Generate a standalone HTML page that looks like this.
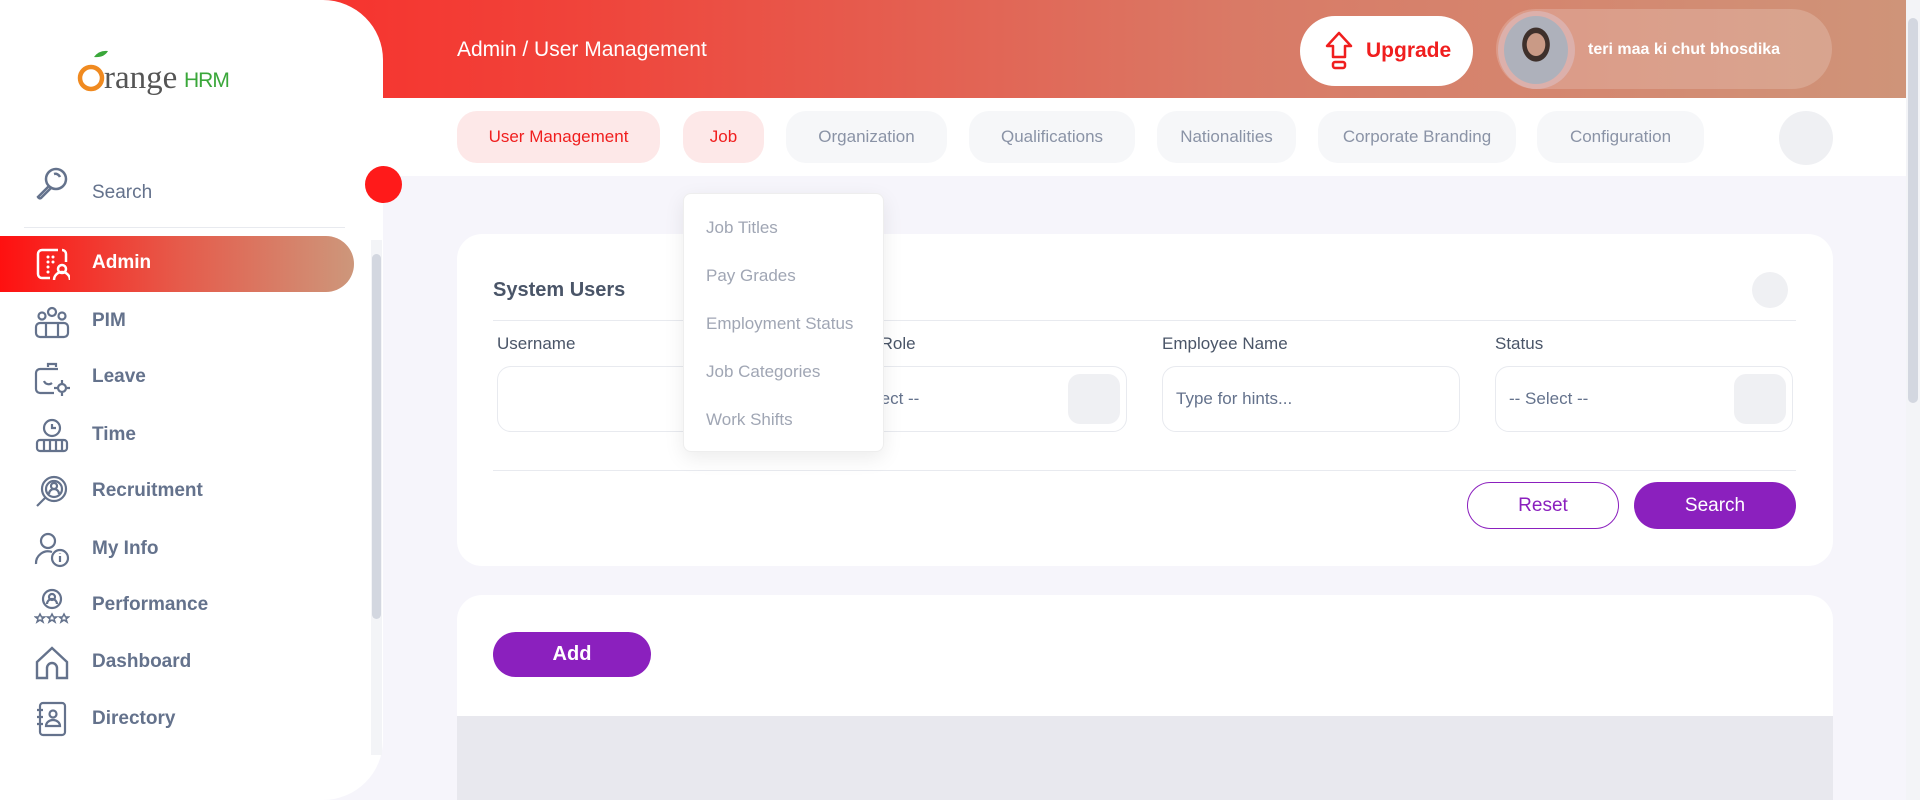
<!DOCTYPE html>
<html><head><meta charset="utf-8"><style>
*{box-sizing:border-box;margin:0;padding:0}
html,body{width:1920px;height:800px;overflow:hidden}
body{background:#f6f5fb;font-family:"Liberation Sans",sans-serif}
#w{position:relative;width:1920px;height:800px;overflow:hidden;background:#f6f5fb}
.abs{position:absolute}
.hdr{left:0;top:0;width:1906px;height:98px;background:linear-gradient(90deg,#ff1f1f 0%,#f0433a 30%,#d97a66 65%,#cf9479 100%)}
.side{left:0;top:0;width:383px;height:800px;background:#fff;border-radius:0 60px 60px 0}
.tabs{left:383px;top:98px;width:1523px;height:78px;background:#fff}
.tab{position:absolute;top:111px;height:52px;border-radius:20px;background:#f6f7f9;color:#8a93a6;font-size:17px;line-height:52px;text-align:center}
.mi{position:absolute;left:92px;font-size:19px;color:#64728c;font-weight:bold}
.card{background:#fff;border-radius:25px}
.lbl{position:absolute;top:334px;font-size:17px;color:#4a5568}
.inp{position:absolute;top:366px;height:66px;border:1px solid #e8eaef;border-radius:14px;font-size:17px;color:#64728c;line-height:64px;padding-left:13px;background:#fff}
.sq{position:absolute;right:6px;top:7px;width:52px;height:50px;background:#eff0f3;border-radius:12px}
.dd{font-size:17px;color:#a0a6b4;position:absolute;left:22px}
</style></head><body><div id="w">
<div class="abs hdr"></div>
<div class="abs tabs"></div>
<div class="abs" style="left:457px;top:38px;color:#fff;font-size:21px">Admin / User Management</div>
<div class="abs" style="left:1300px;top:16px;width:173px;height:70px;background:#fff;border-radius:35px"></div>
<svg class="abs" style="left:1323px;top:30px" width="32" height="42" viewBox="0 0 32 42"><path d="M16 3 L4 16 H10 V27 H22 V16 H28 Z" fill="none" stroke="#f01e1e" stroke-width="2.5" stroke-linejoin="round"/><rect x="10" y="32" width="12" height="6" rx="2" fill="none" stroke="#f01e1e" stroke-width="2.5"/></svg>
<div class="abs" style="left:1366px;top:39px;color:#f01e1e;font-size:21px;font-weight:bold">Upgrade</div>
<div class="abs" style="left:1496px;top:9px;width:336px;height:80px;border-radius:40px;background:rgba(255,255,255,.18)"></div>
<div class="abs" style="left:1498px;top:11px;width:77px;height:78px;border-radius:50%;background:#dcb0ab"></div>
<div class="abs" style="left:1504px;top:16px;width:64px;height:68px;border-radius:50%;background:radial-gradient(ellipse at 50% 42%,#c99a86 0 20%,#3e302b 21% 30%,#aeb1bb 31%)"></div>
<div class="abs" style="left:1588px;top:41px;color:#fff;font-size:16px;font-weight:bold">teri maa ki chut bhosdika</div>

<div class="tab" style="left:457px;width:203px;background:#fde8e8;color:#f01e1e">User Management</div>
<div class="tab" style="left:683px;width:81px;background:#fde8e8;color:#f01e1e">Job</div>
<div class="tab" style="left:786px;width:161px">Organization</div>
<div class="tab" style="left:969px;width:166px">Qualifications</div>
<div class="tab" style="left:1157px;width:139px">Nationalities</div>
<div class="tab" style="left:1318px;width:198px">Corporate Branding</div>
<div class="tab" style="left:1537px;width:167px">Configuration</div>
<div class="abs" style="left:1779px;top:111px;width:54px;height:54px;border-radius:50%;background:#eff0f3"></div>

<div class="abs card" style="left:457px;top:234px;width:1376px;height:332px"></div>
<div class="abs" style="left:493px;top:279px;font-size:20px;font-weight:bold;color:#4a5568">System Users</div>
<div class="abs" style="left:1752px;top:272px;width:36px;height:36px;border-radius:50%;background:#eff0f3"></div>
<div class="abs" style="left:493px;top:320px;width:1303px;height:1px;background:#e8eaef"></div>
<div class="lbl" style="left:497px">Username</div>
<div class="lbl" style="left:840px">User Role</div>
<div class="lbl" style="left:1162px">Employee Name</div>
<div class="lbl" style="left:1495px">Status</div>
<div class="inp" style="left:497px;width:300px"></div>
<div class="inp" style="left:826px;width:301px">-- Select --<div class="sq"></div></div>
<div class="inp" style="left:1162px;width:298px">Type for hints...</div>
<div class="inp" style="left:1495px;width:298px">-- Select --<div class="sq"></div></div>
<div class="abs" style="left:493px;top:470px;width:1303px;height:1px;background:#e8eaef"></div>
<div class="abs" style="left:1467px;top:482px;width:152px;height:47px;border:1px solid #8b20be;border-radius:24px;color:#8b20be;font-size:19px;text-align:center;line-height:45px">Reset</div>
<div class="abs" style="left:1634px;top:482px;width:162px;height:47px;background:#8b20be;border-radius:24px;color:#fff;font-size:19px;text-align:center;line-height:47px">Search</div>

<div class="abs card" style="left:457px;top:595px;width:1376px;height:240px"></div>
<div class="abs" style="left:457px;top:716px;width:1376px;height:84px;background:#e8e8ee"></div>
<div class="abs" style="left:493px;top:632px;width:158px;height:45px;background:#8b20be;border-radius:23px;color:#fff;font-size:20px;font-weight:bold;text-align:center;line-height:45px">Add</div>

<div class="abs" style="left:683px;top:193px;width:201px;height:259px;background:#fff;border-radius:8px;box-shadow:0 6px 20px rgba(0,0,0,.08);border:1px solid #eee">
<div class="dd" style="top:24px">Job Titles</div>
<div class="dd" style="top:72px">Pay Grades</div>
<div class="dd" style="top:120px">Employment Status</div>
<div class="dd" style="top:168px">Job Categories</div>
<div class="dd" style="top:216px">Work Shifts</div>
</div>

<div class="abs side"></div>
<div class="abs" style="left:74px;top:48px;width:180px;height:50px">
<svg width="180" height="50" viewBox="0 0 180 50"><path d="M20 9 q5 -7 14 -6 q-4 7 -14 6z" fill="#3aa73a"/><circle cx="17" cy="30" r="11" fill="none" stroke="#f08a20" stroke-width="4.5"/><text x="30" y="40" font-family="Liberation Serif,serif" font-size="33" fill="#555">range</text><text x="110" y="39" font-family="Liberation Sans,sans-serif" font-size="21" fill="#3aa73a" letter-spacing="-1">HRM</text></svg></div>
<svg class="abs" style="left:34px;top:166px" width="36" height="36" viewBox="0 0 36 36" fill="none" stroke="#64728c" stroke-width="2.5"><circle cx="22" cy="13" r="10"/><path d="M15 20 L4 31 q1 2 3 1 L17 22"/><path d="M20 8 a5 5 0 0 1 6 3"/></svg>
<div class="abs" style="left:92px;top:182px;font-size:19px;color:#64728c">Search</div>
<div class="abs" style="left:24px;top:227px;width:321px;height:1px;background:#e8eaef"></div>
<div class="abs" style="left:0;top:236px;width:354px;height:56px;border-radius:0 28px 28px 0;background:linear-gradient(90deg,#ff1010,#e65a4a 50%,#cd977b)"></div>
<div class="abs" style="left:92px;top:252px;font-size:19px;color:#fff;font-weight:bold">Admin</div>
<svg class="abs" style="left:36px;top:248px" width="34" height="34" viewBox="0 0 34 34" fill="none" stroke="#fff" stroke-width="2.5"><path d="M22 2 H6 a4 4 0 0 0 -4 4 V26 a4 4 0 0 0 4 4 H14"/><path d="M26 2 a4 4 0 0 1 4 4 v8"/><circle cx="26" cy="21" r="4"/><path d="M18 32 a8 8 0 0 1 16 0"/><g fill="#fff" stroke="none"><circle cx="12" cy="9" r="1.5"/><circle cx="17" cy="9" r="1.5"/><circle cx="12" cy="14" r="1.5"/><circle cx="17" cy="14" r="1.5"/><circle cx="12" cy="19" r="1.5"/><circle cx="12" cy="24" r="1.5"/></g></svg>
<div class="mi" style="top:310px">PIM</div>
<div class="mi" style="top:366px">Leave</div>
<div class="mi" style="top:424px">Time</div>
<div class="mi" style="top:480px">Recruitment</div>
<div class="mi" style="top:538px">My Info</div>
<div class="mi" style="top:594px">Performance</div>
<div class="mi" style="top:651px">Dashboard</div>
<div class="mi" style="top:708px">Directory</div>
<svg class="abs" style="left:34px;top:305px" width="36" height="36" viewBox="0 0 36 36" fill="none" stroke="#64728c" stroke-width="2.2"><circle cx="18" cy="7" r="4"/><circle cx="8" cy="11" r="3.5"/><circle cx="28" cy="11" r="3.5"/><rect x="2" y="18" width="32" height="14" rx="4"/><path d="M12 18v14M24 18v14"/></svg>
<svg class="abs" style="left:34px;top:361px" width="36" height="36" viewBox="0 0 36 36" fill="none" stroke="#64728c" stroke-width="2.2"><path d="M14 6 v-3 h8 v3"/><path d="M24 8 H6 a4 4 0 0 0 -4 4 V28 a4 4 0 0 0 4 4 H20"/><path d="M10 20 a5 5 0 0 0 8 2"/><circle cx="28" cy="27" r="4"/><path d="M28 19v3M28 32v3M20 27h3M33 27h3"/></svg>
<svg class="abs" style="left:34px;top:418px" width="36" height="36" viewBox="0 0 36 36" fill="none" stroke="#64728c" stroke-width="2.2"><circle cx="18" cy="10" r="8"/><path d="M18 6v4h4"/><rect x="3" y="22" width="30" height="11" rx="3"/><path d="M10 22v11M16 22v11M22 22v11M28 22v11"/></svg>
<svg class="abs" style="left:34px;top:474px" width="36" height="36" viewBox="0 0 36 36" fill="none" stroke="#64728c" stroke-width="2.2"><circle cx="20" cy="15" r="12"/><circle cx="20" cy="15" r="8"/><circle cx="20" cy="12" r="3"/><path d="M15 20 a5 5 0 0 1 10 0"/><path d="M11 24 L3 32"/></svg>
<svg class="abs" style="left:34px;top:532px" width="36" height="36" viewBox="0 0 36 36" fill="none" stroke="#64728c" stroke-width="2.2"><circle cx="14" cy="9" r="7"/><path d="M2 32 a12 12 0 0 1 16 -12"/><circle cx="26" cy="26" r="8"/><path d="M26 24v6M26 21v.5"/></svg>
<svg class="abs" style="left:34px;top:588px" width="36" height="36" viewBox="0 0 36 36" fill="none" stroke="#64728c" stroke-width="2.2"><circle cx="18" cy="11" r="9"/><circle cx="18" cy="9" r="3"/><path d="M13 16 a5 5 0 0 1 10 0"/><path d="M6 26l1.5 3h3l-2.5 2 1 3-3-2-3 2 1-3-2.5-2h3zM18 26l1.5 3h3l-2.5 2 1 3-3-2-3 2 1-3-2.5-2h3zM30 26l1.5 3h3l-2.5 2 1 3-3-2-3 2 1-3-2.5-2h3z" stroke-width="1.5"/></svg>
<svg class="abs" style="left:34px;top:645px" width="36" height="36" viewBox="0 0 36 36" fill="none" stroke="#64728c" stroke-width="2.4"><path d="M3 17 L18 3 L33 17 V33 H23 V23 a5 5 0 0 0 -10 0 V33 H3 Z"/></svg>
<svg class="abs" style="left:34px;top:701px" width="36" height="36" viewBox="0 0 36 36" fill="none" stroke="#64728c" stroke-width="2.2"><rect x="6" y="2" width="25" height="32" rx="3"/><path d="M3 9h6M3 16h6M3 23h6"/><circle cx="19" cy="13" r="3.5"/><path d="M12 25 a7 6 0 0 1 14 0 z"/></svg>
<div class="abs" style="left:371px;top:240px;width:11px;height:515px;background:#f3f4f7"></div>
<div class="abs" style="left:372px;top:254px;width:9px;height:365px;background:#d3d7e0;border-radius:5px"></div>
<div class="abs" style="left:365px;top:166px;width:37px;height:37px;border-radius:50%;background:#ff1a1a"></div>
<div class="abs" style="left:1906px;top:0;width:14px;height:800px;background:#f3f4f7"></div>
<div class="abs" style="left:1908px;top:18px;width:10px;height:385px;background:#d3d7e0;border-radius:5px"></div>
</div></body></html>
